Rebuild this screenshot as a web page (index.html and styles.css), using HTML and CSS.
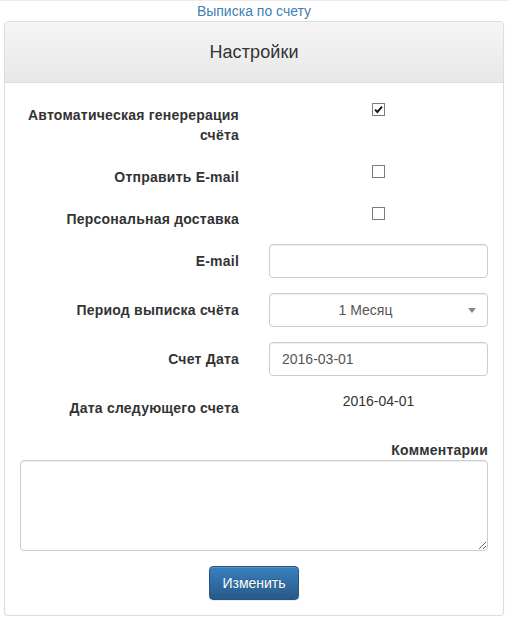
FILE: index.html
```html
<!DOCTYPE html>
<html lang="ru">
<head>
<meta charset="utf-8">
<title>Настройки</title>
<link rel="stylesheet" href="styles.css">
</head>
<body>
<div class="page">
  <div class="top-link-wrap"><a class="top-link" href="#">Выписка по счету</a></div>
  <div class="panel">
    <div class="panel-heading"><h3 class="panel-title">Настройки</h3></div>
    <div class="panel-body">
      <form class="form">
        <div class="form-group">
          <label class="control-label">Автоматическая генерерация счёта</label>
          <div class="control center">
            <span class="check checked"><svg viewBox="0 0 11 11" width="11" height="11"><path d="M2 5.6 L4.4 8 L9 2.6" fill="none" stroke="#1a1a1a" stroke-width="2"/></svg></span>
          </div>
        </div>
        <div class="form-group">
          <label class="control-label">Отправить E-mail</label>
          <div class="control center"><span class="check"></span></div>
        </div>
        <div class="form-group">
          <label class="control-label">Персональная доставка</label>
          <div class="control center"><span class="check"></span></div>
        </div>
        <div class="form-group">
          <label class="control-label">E-mail</label>
          <div class="control"><input class="form-control" type="text"></div>
        </div>
        <div class="form-group">
          <label class="control-label">Период выписка счёта</label>
          <div class="control">
            <div class="select-wrap">
              <select class="form-control select"><option>1 Месяц</option></select>
              <svg class="select-arrow" viewBox="0 0 8 5" width="8" height="5"><path d="M0 0 H8 L4 5 Z" fill="#888"/></svg>
            </div>
          </div>
        </div>
        <div class="form-group">
          <label class="control-label">Счет Дата</label>
          <div class="control"><input class="form-control" type="text" value="2016-03-01"></div>
        </div>
        <div class="form-group">
          <label class="control-label">Дата следующего счета</label>
          <div class="control center static">2016-04-01</div>
        </div>
        <div class="form-group full">
          <label class="control-label">Комментарии</label>
          <textarea class="form-control textarea"></textarea>
        </div>
        <div class="actions">
          <button class="btn-primary" type="button">Изменить</button>
        </div>
      </form>
    </div>
  </div>
</div>
</body>
</html>
```
FILE: styles.css
```css
* { box-sizing: border-box; }
html, body { margin: 0; padding: 0; background: #fff; }
body {
  font-family: "Liberation Sans", Arial, sans-serif;
  font-size: 14px;
  line-height: 20px;
  color: #333;
  border-top: 1px solid #ececec;
}
.page { padding: 0 5px 0 4px; }
.top-link-wrap { text-align: center; height: 20px; }
.top-link { color: #3f7fb6; text-decoration: none; }
.panel {
  border: 1px solid #ddd;
  border-radius: 4px;
  background: #fff;
  box-shadow: 0 1px 2px rgba(0,0,0,.06);
}
.panel-heading {
  padding: 20px 15px;
  border-bottom: 1px solid #ddd;
  border-radius: 3px 3px 0 0;
  background: linear-gradient(to bottom, #f5f5f5 0, #e8e8e8 100%);
  text-align: center;
}
.panel-title { margin: 0; font-size: 18px; line-height: 20px; font-weight: normal; color: #333; letter-spacing: 0.1px; }
.panel-body { padding: 15px; }
.form-group {
  display: grid;
  grid-template-columns: 1fr 1fr;
  margin: 0 -15px 15px;
}
.form-group > * { padding: 0 15px; }
.control-label { text-align: right; padding-top: 7px; font-weight: bold; letter-spacing: 0.22px; }
.center { text-align: center; }
.static { color: #333; }
.check {
  display: inline-block;
  width: 13px; height: 13px;
  margin-top: 5px;
  border: 1px solid #7c7c7c;
  background: #fff;
  vertical-align: top;
}
.check svg { display: block; margin: 0; }
.form-control {
  display: block;
  width: 100%;
  height: 34px;
  padding: 6px 12px;
  font: inherit;
  color: #555;
  background: #fff;
  border: 1px solid #ccc;
  border-radius: 4px;
  box-shadow: inset 0 1px 1px rgba(0,0,0,.075);
  margin: 0;
}
.select-wrap { position: relative; }
.select {
  appearance: none;
  -webkit-appearance: none;
  text-align-last: center;
  text-align: center;
  padding-right: 38px;
}
.select-arrow { position: absolute; right: 12px; top: 15px; }
.form-group.full { display: block; margin: 0 0 15px; }
.form-group.full > * { padding-left: 0; padding-right: 0; }
.form-group.full .control-label { display: block; }
.textarea { height: 91px; resize: vertical; padding: 6px 12px; }
.actions { text-align: center; }
.btn-primary {
  display: inline-block;
  padding: 6px 12px;
  font: inherit;
  color: #fff;
  border: 1px solid #245580;
  border-radius: 4px;
  background: linear-gradient(to bottom, #3a80bf 0, #265a88 100%);
  text-shadow: 0 -1px 0 rgba(0,0,0,.2);
  box-shadow: inset 0 1px 0 rgba(255,255,255,.15), 0 1px 1px rgba(0,0,0,.075);
  cursor: pointer;
}
```
